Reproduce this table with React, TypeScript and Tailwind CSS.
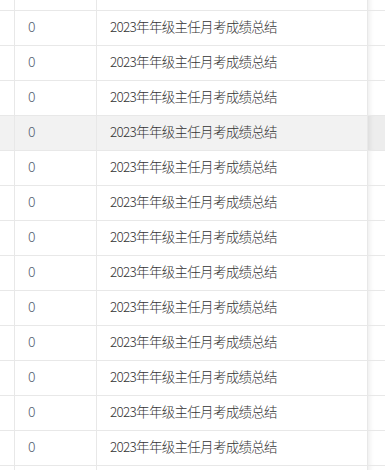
const rows = Array.from({ length: 15 }, (_, i) => ({
  id: i,
  count: 0,
  title: "2023年年级主任月考成绩总结",
}));

const HOVER_ROW = 4;

export default function App() {
  return (
    <div
      className="w-[385px] h-[470px] overflow-hidden bg-white"
      style={{ fontFamily: '"Noto Sans CJK SC", "Noto Sans", sans-serif' }}
    >
      <div className="-mt-[24px] flex flex-col">
        {rows.map((row, i) => {
          const hovered = row.id === HOVER_ROW;
          // rows cut by the scroll viewport show no text
          const clipped = i === 0 || i === rows.length - 1;
          return (
            <div
              key={row.id}
              className={`flex h-[35px] border-b border-[#e8e8e8] ${
                hovered ? "bg-[#f2f2f2]" : "bg-white"
              }`}
            >
              {/* selection column */}
              <div className="w-[15px] shrink-0 border-r border-[#e8e8e8]" />
              {/* count */}
              <div className="w-[82px] shrink-0 border-r border-[#e8e8e8] pl-[13px] pb-[3px] flex items-center text-[14px] font-light text-[#556272]">
                {clipped ? null : row.count}
              </div>
              {/* title */}
              <div className="w-[271px] shrink-0 border-r border-[#e8e8e8] pl-[13px] pb-[3px] flex items-center text-[13.5px] font-light tracking-[-0.7px] text-[#333]">
                {clipped ? null : row.title}
              </div>
              {/* fixed right column */}
              <div
                className={`flex-1 shadow-[inset_6px_0_5px_-4px_rgba(0,0,0,0.07)] ${
                  hovered ? "bg-[#ededed]" : "bg-white"
                }`}
              />
            </div>
          );
        })}
      </div>
    </div>
  );
}
